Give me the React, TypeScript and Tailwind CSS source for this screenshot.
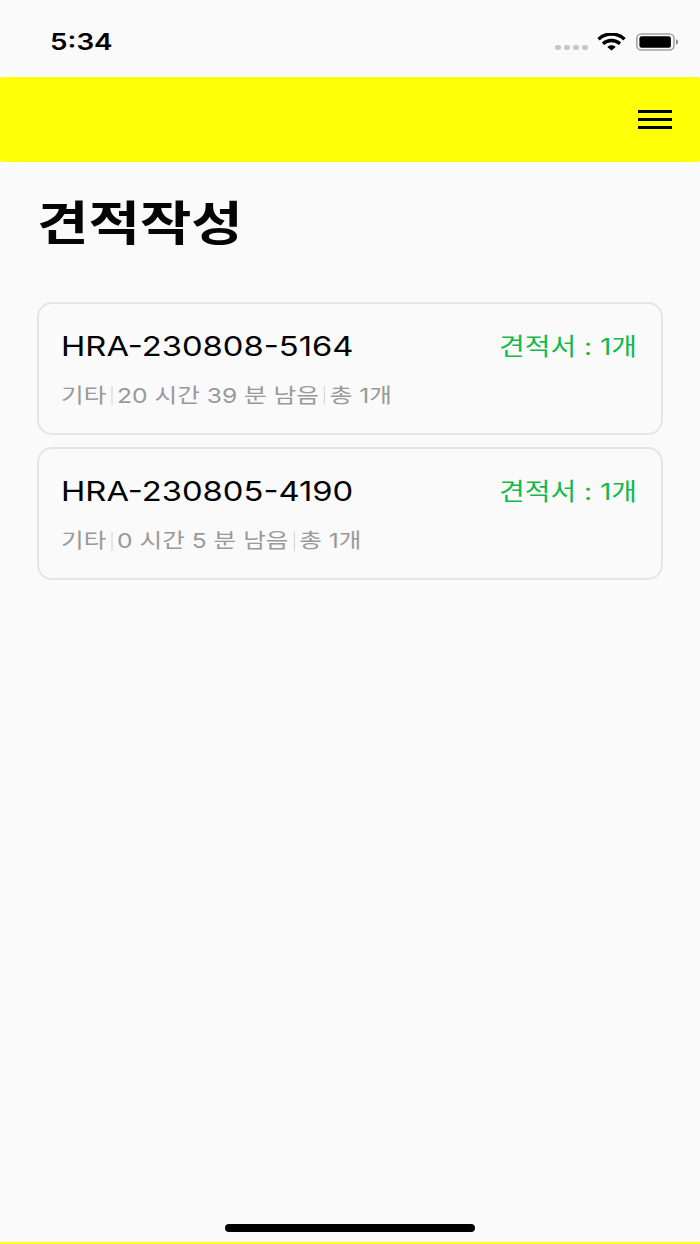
interface Estimate {
  id: string;
  category: string;
  remaining: string;
  total: number;
  quotes: number;
}

const estimates: Estimate[] = [
  { id: 'HRA-230808-5164', category: '기타', remaining: '20 시간 39 분 남음', total: 1, quotes: 1 },
  { id: 'HRA-230805-4190', category: '기타', remaining: '0 시간 5 분 남음', total: 1, quotes: 1 },
];

function StatusBar() {
  return (
    <div className="flex h-[77px] shrink-0 items-center justify-between pr-[21px] pl-[50px] pt-[7px]">
      <span className="origin-left scale-x-[1.21] text-[23px] leading-none font-semibold text-black">5:34</span>
      <div className="flex items-center">
        {/* Signal dots */}
        <div className="mt-[11px] flex gap-[3px]">
          {[0, 1, 2, 3].map((dot) => (
            <span key={dot} className="h-[5px] w-[6px] rounded-[2px] bg-[#c8c8c8]" />
          ))}
        </div>
        {/* Wifi */}
        <svg className="ml-[9px] h-[18px] w-[29px]" viewBox="0 0 29 18" preserveAspectRatio="none" fill="none" stroke="#000">
          <path d="M1.5 6.2C8.7-.6 20.3-.6 27.5 6.2" strokeWidth="3.5" />
          <path d="M6 10.8C10.8 6.4 18.2 6.4 23 10.8" strokeWidth="3.3" />
          <path d="M14.5 17.6L10.3 14C12.5 11.6 16.5 11.6 18.7 14Z" fill="#000" stroke="none" />
        </svg>
        {/* Battery */}
        <svg className="ml-[9px] h-[18px] w-[44px]" viewBox="0 0 44 18">
          <rect x="1.8" y="1" width="37.2" height="16" rx="4.5" fill="none" stroke="#a3a3a3" strokeWidth="1.6" />
          <rect x="4.4" y="3.2" width="31.5" height="11.6" rx="2.2" fill="#000" />
          <path d="M41 6.3C43.8 7.2 43.8 10.8 41 11.7Z" fill="#8c8c8c" />
        </svg>
      </div>
    </div>
  );
}

function Header() {
  return (
    <header className="flex h-[85.4px] shrink-0 items-center justify-end rounded-[2px] bg-[#ffff07] pr-7">
      <button className="flex w-[34px] flex-col gap-[5px]" aria-label="메뉴">
        <span className="h-[3px] bg-black" />
        <span className="h-[3px] bg-black" />
        <span className="h-[3px] bg-black" />
      </button>
    </header>
  );
}

function EstimateCard({ item }: { item: Estimate }) {
  return (
    <li className="h-[133px] rounded-[15px] border-2 border-[#e5e5e5] pr-[24px] pl-[22px] pt-[27px]">
      <div className="flex h-8 items-center justify-between">
        <span className="origin-left scale-x-[1.212] text-[27px] leading-8 text-black">{item.id}</span>
        <span className="origin-right scale-x-[1.19] text-[23.5px] leading-8 text-[#12b94b]">견적서 : {item.quotes}개</span>
      </div>
      <div className="mt-[19px] flex h-7 w-fit origin-left scale-x-[1.2] items-center gap-1 text-[20.5px] leading-7 text-[#999]">
        <span>{item.category}</span>
        <span className="h-[19px] w-px bg-[#d8d8d8]" />
        <span>{item.remaining}</span>
        <span className="h-[19px] w-px bg-[#d8d8d8]" />
        <span>총 {item.total}개</span>
      </div>
    </li>
  );
}

export default function App() {
  return (
    <div lang="ko" className="flex h-[1244px] w-[700px] flex-col overflow-hidden bg-[#fafafa] font-[Inter,'Noto_Sans_CJK_KR',sans-serif]">
      <StatusBar />
      <Header />
      <main className="flex-1 px-[37.4px]">
        <h1 className="mt-[29px] h-16 w-fit origin-left scale-x-[1.19] text-[47px] leading-[64px] font-bold text-[#050505]">
          견적작성
        </h1>
        <ul className="mt-[46.6px] flex flex-col gap-[12.4px]">
          {estimates.map((item) => (
            <EstimateCard key={item.id} item={item} />
          ))}
        </ul>
      </main>
      {/* Home indicator */}
      <div className="mx-auto mb-[10.5px] h-2 w-[250px] shrink-0 rounded-full bg-black" />
      <div className="h-[2px] shrink-0 bg-[#ffff20]" />
    </div>
  );
}
